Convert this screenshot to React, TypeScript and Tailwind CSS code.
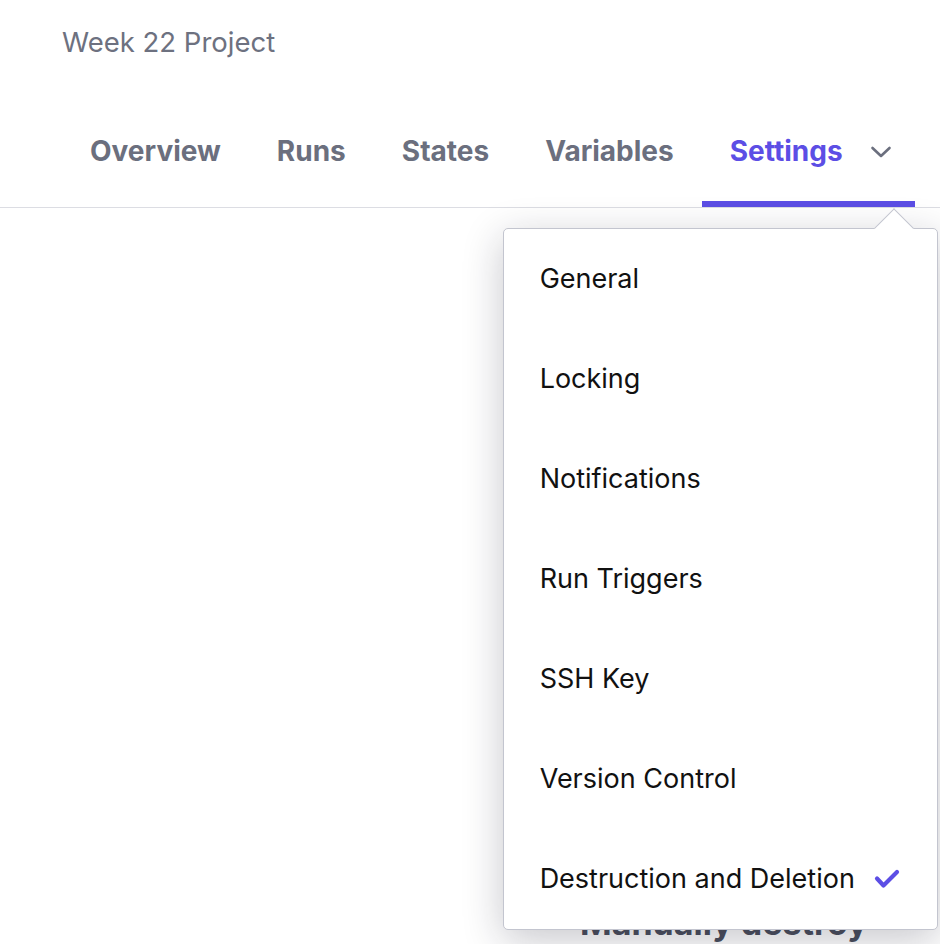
import { Fragment } from "react";

const tabs = ["Overview", "Runs", "States", "Variables"];

const settingsItems = [
  "General",
  "Locking",
  "Notifications",
  "Run Triggers",
  "SSH Key",
  "Version Control",
  "Destruction and Deletion",
];

function Chevron() {
  return (
    <svg width="22" height="14" viewBox="0 0 22 14" fill="none">
      <path
        d="M2.5 3 L11 11 L19.5 3"
        stroke="#6b6f7e"
        strokeWidth="2.6"
        strokeLinecap="round"
        strokeLinejoin="round"
      />
    </svg>
  );
}

function Check() {
  return (
    <svg width="26" height="20" viewBox="0 0 26 20" fill="none">
      <path
        d="M3 9.5 L9.5 16.5 L23 3"
        stroke="#5c4ee5"
        strokeWidth="4.2"
        strokeLinecap="round"
        strokeLinejoin="round"
      />
    </svg>
  );
}

export default function App() {
  return (
    <div
      className="relative h-[944px] w-[940px] overflow-hidden bg-white"
      style={{ fontFamily: "Inter, 'Noto Sans', sans-serif" }}
    >
      <div className="pl-[62px] pt-[26px] text-[27.5px] leading-[32px] text-[#6d7180]">
        Week 22 Project
      </div>

      <nav className="mt-[77px] border-b border-[#dcdde3]">
        <ul className="flex pl-[62px] text-[28px] font-bold leading-[32px]">
          {tabs.map((t) => (
            <li
              key={t}
              className="border-b-[6px] border-transparent px-[28px] pb-[34px] text-[#6b6f7e]"
            >
              {t}
            </li>
          ))}
          <li className="relative flex items-start gap-[27px] border-b-[6px] border-[#5c4ee5] pb-[34px] pl-[28px] pr-[23px] text-[#5c4ee5]">
            <span>Settings</span>
            <span className="pt-[10px]">
              <Chevron />
            </span>

            <div className="absolute right-[-23px] top-[calc(100%+27px)] z-10 w-[435px] rounded-[5px] border border-[#c3c5cf] bg-white font-normal shadow-[0_10px_40px_rgba(20,20,40,0.24)]">
              <div className="absolute right-[29px] top-[-15px] h-[28px] w-[28px] rotate-45 border-l border-t border-[#c3c5cf] bg-white" />
              <ul className="relative">
                {settingsItems.map((item, i) => (
                  <Fragment key={item}>
                    <li className="flex h-[100px] items-center gap-[19px] pl-[36px] text-[27px] leading-[32px] text-[#111111]">
                      <span>{item}</span>
                      {i === settingsItems.length - 1 && <Check />}
                    </li>
                  </Fragment>
                ))}
              </ul>
            </div>
          </li>
        </ul>
      </nav>

      <main className="pl-[580px] pt-[695px]">
        <h2 className="whitespace-nowrap text-[34px] font-bold leading-[40px] text-[#4b4f5e]">
          Manually destroy
        </h2>
      </main>
    </div>
  );
}
